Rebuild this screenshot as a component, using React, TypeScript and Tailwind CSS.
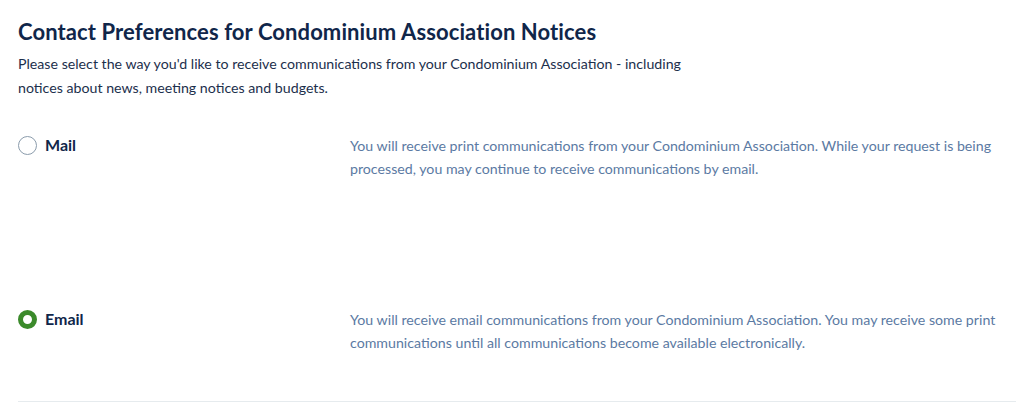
import React from "react";

export default function App() {
  const font = { fontFamily: "Lato, 'Open Sans', sans-serif" };
  return (
    <div className="w-[1024px] h-[418px] bg-white" style={font}>
      <div className="px-[18px] pt-[18px]">
        <h1 className="text-[22px] leading-[28px] font-bold text-[#10264a] tracking-[0.1px]">
          Contact Preferences for Condominium Association Notices
        </h1>
        <p className="mt-[6px] text-[14.2px] leading-[24px] text-[#1c2f4c] max-w-[680px]">
          Please select the way you'd like to receive communications from your Condominium Association - including notices about news, meeting notices and budgets.
        </p>

        <div className="mt-[34px] flex h-[174px]">
          <label className="flex shrink-0 items-start gap-[8px] w-[332px]">
            <span className="mt-[2px] w-[19px] h-[19px] rounded-full border-[1.5px] border-[#8b9cac] bg-white" />
            <span className="text-[16px] leading-[22px] font-bold text-[#10264a]">Mail</span>
          </label>
          <p className="flex-1 text-[14.2px] leading-[23px] text-[#5b7aa3]">
            You will receive print communications from your Condominium Association. While your request is being processed, you may continue to receive communications by email.
          </p>
        </div>

        <div className="flex h-[93px]">
          <label className="flex shrink-0 items-start gap-[8px] w-[332px]">
            <span className="mt-[2px] w-[19px] h-[19px] rounded-full border-[5.5px] border-[#3b8a2b] bg-white" />
            <span className="text-[16px] leading-[22px] font-bold text-[#10264a]">Email</span>
          </label>
          <p className="flex-1 text-[14.2px] leading-[23px] text-[#5b7aa3]">
            You will receive email communications from your Condominium Association. You may receive some print communications until all communications become available electronically.
          </p>
        </div>
        <div className="mr-[-10px] h-px bg-[#e6ebee]" />
      </div>
    </div>
  );
}
